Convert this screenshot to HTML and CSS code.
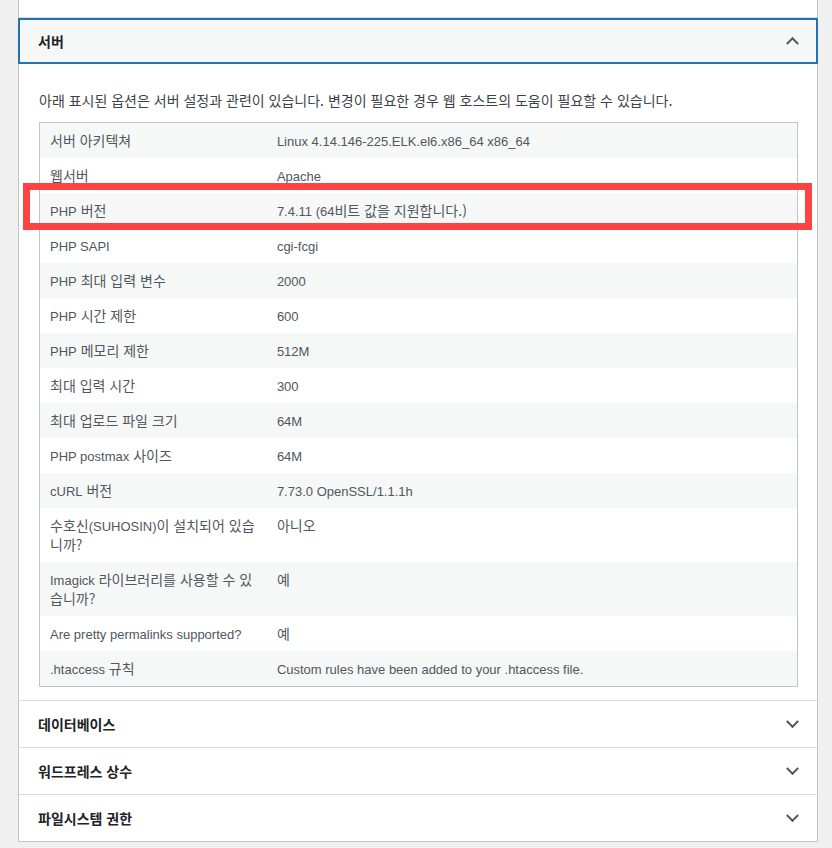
FILE: index.html
```html
<!DOCTYPE html>
<html lang="ko">
<head>
<meta charset="utf-8">
<title>사이트 건강 - 서버</title>
<link rel="stylesheet" href="styles.css">
</head>
<body>
<div class="page">
  <div class="accordion">
    <div class="prev-panel"></div>
    <h3 class="acc-heading">
      <button class="trigger is-open" aria-expanded="true"><span class="title">서버</span><span class="icon"></span></button>
    </h3>
    <div class="panel">
      <p class="desc">아래 표시된 옵션은 서버 설정과 관련이 있습니다. 변경이 필요한 경우 웹 호스트의 도움이 필요할 수 있습니다.</p>
      <table class="info">
        <tbody>
          <tr><td class="label">서버 아키텍쳐</td><td class="en" lang="en">Linux 4.14.146-225.ELK.el6.x86_64 x86_64</td></tr>
          <tr><td class="label">웹서버</td><td class="en" lang="en">Apache</td></tr>
          <tr><td class="label"><span class="en-run" lang="en">PHP</span> 버전</td><td><span class="en-run" lang="en">7.4.11 (64</span>비트 값을 지원합니다.)</td></tr>
          <tr><td class="label en" lang="en">PHP SAPI</td><td class="en" lang="en">cgi-fcgi</td></tr>
          <tr><td class="label"><span class="en-run" lang="en">PHP</span> 최대 입력 변수</td><td class="en" lang="en">2000</td></tr>
          <tr><td class="label"><span class="en-run" lang="en">PHP</span> 시간 제한</td><td class="en" lang="en">600</td></tr>
          <tr><td class="label"><span class="en-run" lang="en">PHP</span> 메모리 제한</td><td class="en" lang="en">512M</td></tr>
          <tr><td class="label">최대 입력 시간</td><td class="en" lang="en">300</td></tr>
          <tr><td class="label">최대 업로드 파일 크기</td><td class="en" lang="en">64M</td></tr>
          <tr><td class="label"><span class="en-run" lang="en">PHP postmax</span> 사이즈</td><td class="en" lang="en">64M</td></tr>
          <tr><td class="label"><span class="en-run" lang="en">cURL</span> 버전</td><td class="en" lang="en">7.73.0 OpenSSL/1.1.1h</td></tr>
          <tr><td class="label">수호신<span class="en-run" lang="en">(SUHOSIN)</span>이 설치되어 있습니까?</td><td>아니오</td></tr>
          <tr><td class="label"><span class="en-run" lang="en">Imagick</span> 라이브러리를 사용할 수 있습니까?</td><td>예</td></tr>
          <tr><td class="label en" lang="en">Are pretty permalinks supported?</td><td>예</td></tr>
          <tr><td class="label"><span class="en-run" lang="en">.htaccess</span> 규칙</td><td class="en" lang="en">Custom rules have been added to your .htaccess file.</td></tr>
        </tbody>
      </table>
    </div>
    <h3 class="acc-heading">
      <button class="trigger" aria-expanded="false"><span class="title">데이터베이스</span><span class="icon"></span></button>
    </h3>
    <h3 class="acc-heading">
      <button class="trigger" aria-expanded="false"><span class="title">워드프레스 상수</span><span class="icon"></span></button>
    </h3>
    <h3 class="acc-heading">
      <button class="trigger" aria-expanded="false"><span class="title">파일시스템 권한</span><span class="icon"></span></button>
    </h3>
  </div>
  <div class="highlight"></div>
</div>
</body>
</html>
```

FILE: styles.css
```css
html, body {
  margin: 0;
  padding: 0;
  background: #f0f0f1;
}

body {
  font-family: "Noto Sans CJK KR", "Noto Sans", sans-serif;
  font-size: 14px;
  color: #3c434a;
}

.page {
  position: relative;
  padding-left: 18px;
  height: 848px;
  overflow: hidden;
}

.accordion {
  width: 800px;
  box-sizing: border-box;
  border: 1px solid #c3c4c7;
  border-top: 0;
  background: #fff;
}

.prev-panel {
  height: 17px;
  background: #fff;
}

.acc-heading {
  margin: 0;
  border-top: 1px solid #dcdcde;
  font-size: 14px;
  font-weight: 600;
}

.trigger {
  position: relative;
  display: flex;
  align-items: center;
  box-sizing: border-box;
  width: 100%;
  height: 46px;
  margin: 0;
  padding: 0 45px 0 19px;
  border: 0;
  background: #fff;
  color: #1d2327;
  font-family: inherit;
  font-size: 14px;
  text-align: left;
  cursor: pointer;
}

.trigger.is-open {
  width: calc(100% + 2px);
  margin: 0 -1px;
  padding-left: 20px;
  background: #f6f7f7;
  box-shadow: inset 0 0 0 2px #2271b1;
}

.title {
  font-weight: 700;
  line-height: 20px;
}

.icon {
  position: absolute;
  right: 20px;
  top: 50%;
  width: 7px;
  height: 7px;
  border: solid #50575e;
  border-width: 0 2px 2px 0;
  transform: translateY(-75%) rotate(45deg);
}

.trigger.is-open .icon {
  right: 21px;
  transform: translateY(-25%) rotate(-135deg);
}

.panel {
  padding: 13px 19px 13px 20px;
  background: #fff;
}

.desc {
  margin: 13px 0 12px;
  line-height: 20px;
  color: #3c434a;
}

.info {
  width: 100%;
  border-collapse: collapse;
  border: 1px solid #c3c4c7;
  table-layout: fixed;
}

.info td {
  height: 19px;
  padding: 8px 10px;
  line-height: 19px;
  color: #50575e;
  vertical-align: top;
}

.info td.en {
  font-family: "Liberation Sans", "Noto Sans CJK KR", sans-serif;
  font-size: 13px;
  padding-top: 9px;
  padding-bottom: 7px;
}

.en-run {
  font-family: "Liberation Sans", "Noto Sans CJK KR", sans-serif;
  font-size: 13px;
  line-height: 15px;
}

.info td.label {
  width: 30%;
  box-sizing: border-box;
}

.info tr:nth-child(odd) td {
  background: #f6f7f7;
}

.highlight {
  position: absolute;
  left: 23px;
  top: 183px;
  width: 789px;
  height: 47px;
  box-sizing: border-box;
  border: 7px solid #ff4242;
  pointer-events: none;
}
```
